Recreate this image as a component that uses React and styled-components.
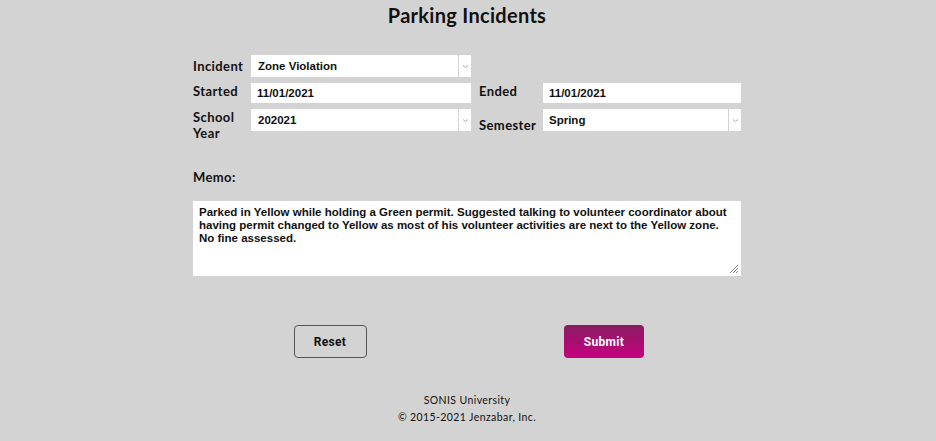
import React from "react";
import styled, { createGlobalStyle } from "styled-components";

const Global = createGlobalStyle`
  html, body { margin: 0; padding: 0; background: #d3d3d3; }
  body { font-family: "Lato", "DejaVu Sans", sans-serif; color: #111; }
`;

const Page = styled.div`
  width: 934px;
  min-height: 441px;
  display: flex;
  flex-direction: column;
  align-items: center;
`;

const Title = styled.h1`
  margin: 3px 0 0;
  font-family: "Lato", sans-serif;
  font-weight: 700;
  font-size: 20px;
  line-height: 24px;
  color: #111;
  letter-spacing: 0.3px;
`;

const Form = styled.div`
  width: 548px;
  margin-top: 28px;
  display: grid;
  grid-template-columns: 58px 220px 8px 64px 198px;
  row-gap: 6px;
  align-items: start;
`;

const Label = styled.div`
  font-family: "Lato", sans-serif;
  font-weight: 700;
  font-size: 13px;
  line-height: 16px;
  letter-spacing: 0.4px;
  color: #111;
  grid-column: ${(p) => p.$col};
  align-self: ${(p) => p.$align || "start"};
`;

const TextInput = styled.div`
  grid-column: ${(p) => p.$col};
  height: 20px;
  background: #fff;
  display: flex;
  align-items: center;
  padding-left: 6px;
  font-family: "Liberation Sans", Arial, sans-serif;
  font-weight: 700;
  font-size: 11.5px;
  color: #111;
  box-sizing: border-box;
`;

const Select = styled.div`
  grid-column: ${(p) => p.$col};
  height: 22px;
  display: flex;
  gap: 1px;
`;

const SelectValue = styled.div`
  flex: 1;
  background: #fff;
  display: flex;
  align-items: center;
  padding-left: ${(p) => p.$pl || 7}px;
  font-family: "Liberation Sans", Arial, sans-serif;
  font-weight: 700;
  font-size: 11.5px;
  color: #111;
  box-sizing: border-box;
`;

const SelectArrow = styled.div`
  width: 12px;
  background: #fff;
  display: flex;
  align-items: center;
  justify-content: center;
`;

const MemoLabel = styled.div`
  grid-column: 1 / -1;
  margin-top: 22px;
  font-family: "Lato", sans-serif;
  font-weight: 700;
  font-size: 13px;
  line-height: 16px;
  letter-spacing: 0.4px;
`;

const Memo = styled.div`
  grid-column: 1 / -1;
  margin-top: 10px;
  height: 75px;
  background: #fff;
  position: relative;
  padding: 5px 6px;
  box-sizing: border-box;
  font-family: "Liberation Sans", Arial, sans-serif;
  font-weight: 700;
  font-size: 11.5px;
  line-height: 13px;
  color: #111;
  white-space: pre-line;
`;

const Grip = styled.svg`
  position: absolute;
  right: 2px;
  bottom: 2px;
`;

const Buttons = styled.div`
  grid-column: 1 / -1;
  margin-top: 43px;
  display: grid;
  grid-template-columns: 1fr 1fr;
  justify-items: center;
`;

const Button = styled.button`
  width: ${(p) => p.$w}px;
  height: 33px;
  border-radius: 4px;
  font-family: "Roboto", sans-serif;
  font-weight: 700;
  font-size: 12px;
  cursor: pointer;
  border: ${(p) => (p.$primary ? "none" : "1px solid #555")};
  background: ${(p) =>
    p.$primary ? "linear-gradient(#891d60, #c5007f)" : "transparent"};
  color: ${(p) => (p.$primary ? "#fff" : "#111")};
  letter-spacing: 0.3px;
`;

const Footer = styled.div`
  margin-top: 34px;
  text-align: center;
  font-family: "Lato", sans-serif;
  font-size: 10.5px;
  line-height: 17px;
  letter-spacing: 0.4px;
  color: #111;
`;

const Chevron = () => (
  <svg width="7" height="5" viewBox="0 0 7 5">
    <path d="M1 1.5 L3.5 3.5 L6 1.5" fill="none" stroke="#aaa" strokeWidth="1" />
  </svg>
);

const memoText =
  "Parked in Yellow while holding a Green permit. Suggested talking to volunteer coordinator about\nhaving permit changed to Yellow as most of his volunteer activities are next to the Yellow zone.\nNo fine assessed.";

export default function App() {
  return (
    <Page>
      <Global />
      <Title>Parking Incidents</Title>
      <Form>
        <Label $col="1" $align="center">Incident</Label>
        <Select $col="2">
          <SelectValue>Zone Violation</SelectValue>
          <SelectArrow><Chevron /></SelectArrow>
        </Select>

        <Label $col="1">Started</Label>
        <TextInput $col="2">11/01/2021</TextInput>
        <Label $col="4">Ended</Label>
        <TextInput $col="5">11/01/2021</TextInput>

        <Label $col="1">School<br />Year</Label>
        <Select $col="2">
          <SelectValue>202021</SelectValue>
          <SelectArrow><Chevron /></SelectArrow>
        </Select>
        <Label $col="4" $align="center">Semester</Label>
        <Select $col="5">
          <SelectValue $pl="6">Spring</SelectValue>
          <SelectArrow><Chevron /></SelectArrow>
        </Select>

        <MemoLabel>Memo:</MemoLabel>
        <Memo>
          {memoText}
          <Grip width="12" height="12" viewBox="0 0 12 12">
            <path d="M11 3 L3 11 M11 6 L6 11 M11 9 L9 11" stroke="#888" strokeWidth="1" />
          </Grip>
        </Memo>

        <Buttons>
          <Button $w={73}>Reset</Button>
          <Button $w={80} $primary>Submit</Button>
        </Buttons>
      </Form>
      <Footer>
        SONIS University
        <br />© 2015-2021 Jenzabar, Inc.
      </Footer>
    </Page>
  );
}
